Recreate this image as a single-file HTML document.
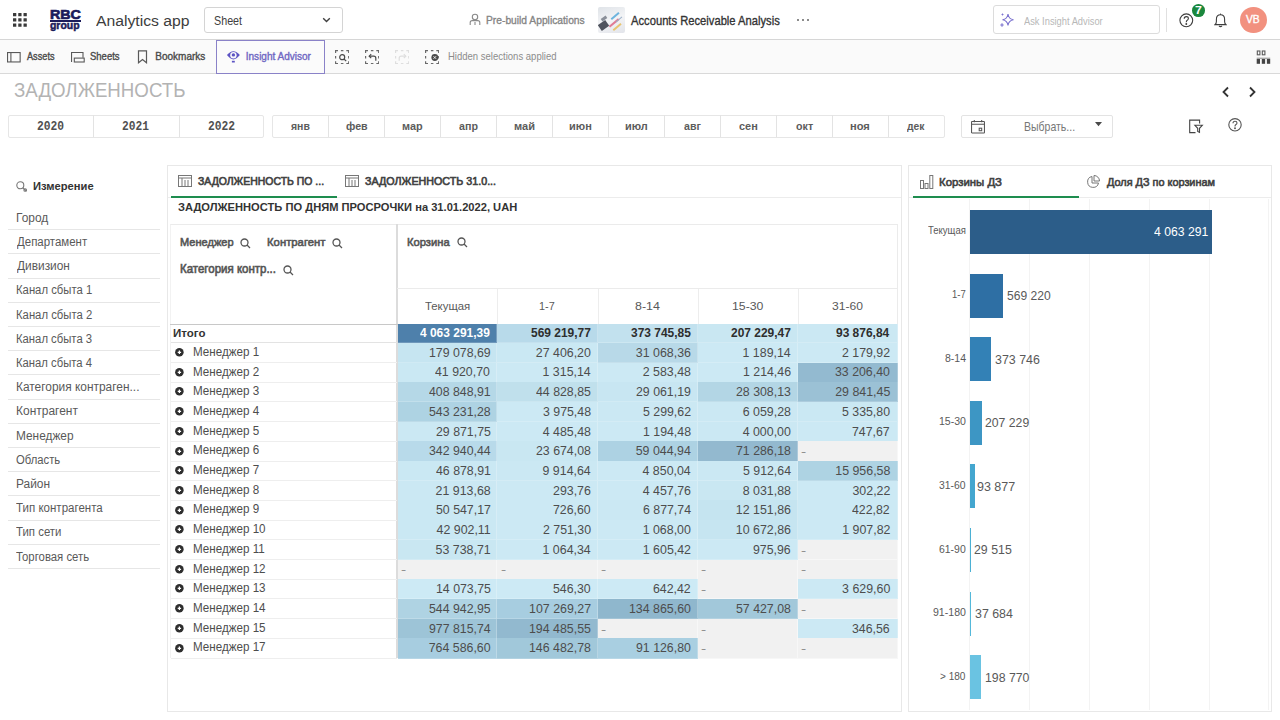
<!DOCTYPE html><html><head><meta charset="utf-8"><style>*{box-sizing:border-box;margin:0;padding:0}
html,body{width:1280px;height:720px;overflow:hidden;background:#fff;font-family:"Liberation Sans",sans-serif;color:#404040}
.abs{position:absolute}
.t{position:absolute;white-space:nowrap;line-height:1}
</style></head><body>
<div class="abs" style="left:0;top:0;width:1280px;height:40px;background:#fff;border-bottom:1px solid #d6d6d6"></div>
<svg class="abs" style="left:13px;top:13px" width="15" height="15" viewBox="0 0 15 15" fill="#3a3a3a"><rect x="0" y="0" width="3.3" height="3.3" rx="0.3"/><rect x="0" y="5.25" width="3.3" height="3.3" rx="0.3"/><rect x="0" y="10.5" width="3.3" height="3.3" rx="0.3"/><rect x="5.25" y="0" width="3.3" height="3.3" rx="0.3"/><rect x="5.25" y="5.25" width="3.3" height="3.3" rx="0.3"/><rect x="5.25" y="10.5" width="3.3" height="3.3" rx="0.3"/><rect x="10.5" y="0" width="3.3" height="3.3" rx="0.3"/><rect x="10.5" y="5.25" width="3.3" height="3.3" rx="0.3"/><rect x="10.5" y="10.5" width="3.3" height="3.3" rx="0.3"/></svg>
<div class="t" style="left:49.55px;top:8px;font-family:'Liberation Sans';font-size:13.37px;font-weight:bold;color:#1b1b5a;transform:scaleX(1.0645);transform-origin:0 0;-webkit-text-stroke:0.7px #1b1b5a;">RBC</div>
<div class="abs" style="left:50px;top:20.3px;width:30.5px;height:1.4px;background:#1b1b5a"></div>
<div class="t" style="left:50.37px;top:20px;font-family:'Liberation Sans';font-size:10.50px;font-weight:bold;color:#1b1b5a;transform:scaleX(0.9937);transform-origin:0 0;-webkit-text-stroke:0.5px #1b1b5a;">group</div>
<div class="t" style="left:96.37px;top:13px;font-family:'Liberation Sans';font-size:15.26px;font-weight:normal;color:#3d3d3d;transform:scaleX(1.0321);transform-origin:0 0;">Analytics app</div>
<div class="abs" style="left:203.5px;top:7px;width:139.5px;height:26px;border:1px solid #d4d4d4;border-radius:3px"></div>
<div class="t" style="left:213.51px;top:15px;font-family:'Liberation Sans';font-size:11.99px;font-weight:normal;color:#404040;transform:scaleX(0.8956);transform-origin:0 0;">Sheet</div>
<svg class="abs" style="left:322px;top:17px" width="9" height="6" viewBox="0 0 9 6"><path d="M1.2 1.2 L4.5 4.5 L7.8 1.2" fill="none" stroke="#404040" stroke-width="1.4"/></svg>
<svg class="abs" style="left:469px;top:13px" width="12" height="13" viewBox="0 0 12 13" fill="none" stroke="#8a8a8a" stroke-width="1.1"><circle cx="6" cy="4" r="2.7"/><path d="M1.2 12 V9.6 Q1.2 7.6 3.2 7.6 H8.8 Q10.8 7.6 10.8 9.6 V12"/><path d="M6 9 V12"/></svg>
<div class="t" style="left:485.86px;top:15px;font-family:'Liberation Sans';font-size:11.48px;font-weight:normal;color:#858585;transform:scaleX(0.8948);transform-origin:0 0;-webkit-text-stroke:0.35px #858585;">Pre-build Applications</div>
<div class="abs" style="left:598px;top:7px;width:27px;height:26px;border-radius:2px;background:linear-gradient(160deg,#dfe3e8 0%,#f3f4f6 50%,#e2e4ea 100%);overflow:hidden">
<div class="abs" style="left:1px;top:15px;width:9px;height:7px;background:#50545e;transform:rotate(-35deg)"></div>
<div class="abs" style="left:3px;top:10px;width:6px;height:3px;background:#8a8f99;transform:rotate(-35deg)"></div>
<div class="abs" style="left:12px;top:8px;width:10px;height:1.6px;background:#6db4de;transform:rotate(-40deg)"></div>
<div class="abs" style="left:10px;top:15px;width:12px;height:1.8px;background:#e07a92;transform:rotate(-40deg)"></div>
<div class="abs" style="left:14px;top:19px;width:10px;height:1.5px;background:#e8c470;transform:rotate(-40deg)"></div>
<div class="abs" style="left:17px;top:12px;width:8px;height:1.2px;background:#9ab0c8;transform:rotate(-40deg)"></div></div>
<div class="t" style="left:631.48px;top:14px;font-family:'Liberation Sans';font-size:13.37px;font-weight:normal;color:#333;transform:scaleX(0.8383);transform-origin:0 0;-webkit-text-stroke:0.35px #333;">Accounts Receivable Analysis</div>
<div class="abs" style="left:797px;top:19px;width:2.4px;height:2.4px;border-radius:50%;background:#666"></div><div class="abs" style="left:802px;top:19px;width:2.4px;height:2.4px;border-radius:50%;background:#666"></div><div class="abs" style="left:807px;top:19px;width:2.4px;height:2.4px;border-radius:50%;background:#666"></div>
<div class="abs" style="left:992.7px;top:5.2px;width:167px;height:29.3px;border:1px solid #dcdcdc;border-radius:3px"></div>
<svg class="abs" style="left:999px;top:12px" width="16" height="16" viewBox="0 0 16 16" fill="none" stroke="#7b72cf" stroke-width="1.1"><path d="M9 2 Q9.6 7 14.5 7.8 Q9.6 8.6 9 13.5 Q8.4 8.6 3.5 7.8 Q8.4 7 9 2Z"/><path d="M3 11.3 V14.7 M1.3 13 H4.7"/><path d="M3.5 1.5 V3.5 M2.5 2.5 H4.5" stroke-width="0.9"/></svg>
<div class="t" style="left:1023.98px;top:16px;font-family:'Liberation Sans';font-size:10.90px;font-weight:normal;color:#b8b8b8;transform:scaleX(0.8553);transform-origin:0 0;">Ask Insight Advisor</div>
<div class="abs" style="left:1166px;top:8px;width:1px;height:24px;background:#e0e0e0"></div>
<svg class="abs" style="left:1179px;top:13px" width="15" height="15" viewBox="0 0 15 15" fill="none" stroke="#3d3d3d" stroke-width="1.1"><circle cx="7.3" cy="7.3" r="6.4"/><path d="M5.2 5.7 Q5.2 3.6 7.3 3.6 Q9.4 3.6 9.4 5.5 Q9.4 6.7 8 7.4 Q7.3 7.8 7.3 9.2"/><circle cx="7.3" cy="11" r="0.4" fill="#3d3d3d"/></svg>
<div class="abs" style="left:1191.8px;top:3.9px;width:13.3px;height:13px;border-radius:50%;background:#1a873d"></div>
<div class="t" style="left:1195.27px;top:5px;font-family:'Liberation Sans';font-size:10.90px;font-weight:bold;color:#fff;transform:scaleX(1.1338);transform-origin:0 0;">7</div>
<svg class="abs" style="left:1213.5px;top:12.5px" width="13" height="15" viewBox="0 0 13 15" fill="none" stroke="#3d3d3d" stroke-width="1.1"><path d="M1 11.6 Q2.4 10.6 2.4 8.6 V6.2 Q2.4 1.8 6.5 1.8 Q10.6 1.8 10.6 6.2 V8.6 Q10.6 10.6 12 11.6 Z"/><path d="M5 12.9 Q6.5 14.4 8 12.9"/><path d="M6.5 0.6 V1.8"/></svg>
<div class="abs" style="left:1239.8px;top:6.6px;width:27px;height:26.6px;border-radius:50%;background:#f2917f"></div>
<div class="t" style="left:1246.45px;top:15px;font-family:'Liberation Sans';font-size:10.32px;font-weight:normal;color:#fff;transform:scaleX(0.9942);transform-origin:0 0;-webkit-text-stroke:0.35px #fff;">VB</div>
<div class="abs" style="left:0;top:40px;width:1280px;height:34px;background:#fafafa;border-bottom:1px solid #d9d9d9"></div>
<svg class="abs" style="left:6.5px;top:51.5px" width="14" height="11" viewBox="0 0 14 11" fill="none" stroke="#595959" stroke-width="1.1"><rect x="0.55" y="0.55" width="12.6" height="9.4"/><path d="M3.9 0.55 V10"/></svg>
<div class="t" style="left:26.68px;top:52px;font-family:'Liberation Sans';font-size:10.03px;font-weight:normal;color:#4a4a4a;transform:scaleX(0.9153);transform-origin:0 0;-webkit-text-stroke:0.35px #4a4a4a;">Assets</div>
<svg class="abs" style="left:70.5px;top:51.5px" width="14" height="11" viewBox="0 0 14 11" fill="none" stroke="#595959" stroke-width="1.1"><path d="M0.55 10 V0.55 H12 V5.8"/><rect x="3.3" y="6.1" width="9.9" height="3.9"/></svg>
<div class="t" style="left:90.17px;top:52px;font-family:'Liberation Sans';font-size:10.03px;font-weight:normal;color:#4a4a4a;transform:scaleX(0.9472);transform-origin:0 0;-webkit-text-stroke:0.35px #4a4a4a;">Sheets</div>
<svg class="abs" style="left:137px;top:50px" width="11" height="14" viewBox="0 0 11 14" fill="none" stroke="#595959" stroke-width="1.2"><path d="M1.5 0.8 H9.5 V12.8 L5.5 9.6 L1.5 12.8 Z"/></svg>
<div class="t" style="left:155.28px;top:52px;font-family:'Liberation Sans';font-size:10.03px;font-weight:normal;color:#4a4a4a;-webkit-text-stroke:0.35px #4a4a4a;">Bookmarks</div>
<div class="abs" style="left:216px;top:39.5px;width:109px;height:34px;border:1px solid #8a82c8;background:#fbfbfb"></div>
<svg class="abs" style="left:226px;top:49px" width="15" height="15" viewBox="0 0 15 15"><path d="M0.9 6.1 Q7.4 -1.6 13.9 6.1 Q10.5 10.2 7.4 10.4 Q4.3 10.2 0.9 6.1Z" fill="#5d54c4"/><circle cx="7.4" cy="6.3" r="3.2" fill="#fafafa"/><circle cx="7.4" cy="5.9" r="1.7" fill="#5d54c4"/><rect x="5.9" y="11.8" width="2.9" height="1.7" fill="#5d54c4"/></svg>
<div class="t" style="left:245.77px;top:52px;font-family:'Liberation Sans';font-size:10.03px;font-weight:normal;color:#6f67c3;-webkit-text-stroke:0.35px #6f67c3;">Insight Advisor</div>
<svg class="abs" style="left:334.8px;top:49.7px" width="14.3" height="14.3" viewBox="0 0 14.3 14.3" fill="none" stroke="#6a6a6a" stroke-width="1.2"><path d="M0.6 3 V0.6 H3 M5.9 0.6 H8.4 M11.3 0.6 H13.7 V3 M13.7 5.9 V8.4 M13.7 11.3 V13.7 H11.3 M8.4 13.7 H5.9 M3 13.7 H0.6 V11.3 M0.6 8.4 V5.9"/></svg>
<svg class="abs" style="left:334.8px;top:49.7px" width="15" height="15" viewBox="0 0 15 15" fill="none" stroke="#4a4a4a" stroke-width="1.2"><circle cx="7.2" cy="7.2" r="2.5"/><path d="M9 9 L11.2 11.2"/></svg>
<svg class="abs" style="left:364.8px;top:49.7px" width="14.3" height="14.3" viewBox="0 0 14.3 14.3" fill="none" stroke="#6a6a6a" stroke-width="1.2"><path d="M0.6 3 V0.6 H3 M5.9 0.6 H8.4 M11.3 0.6 H13.7 V3 M13.7 5.9 V8.4 M13.7 11.3 V13.7 H11.3 M8.4 13.7 H5.9 M3 13.7 H0.6 V11.3 M0.6 8.4 V5.9"/></svg>
<svg class="abs" style="left:364.8px;top:49.5px" width="15" height="15" viewBox="0 0 15 15" fill="none" stroke="#4a4a4a" stroke-width="1.2"><path d="M4.2 6.2 H8.8 Q10.8 6.2 10.8 8.2 V10.8"/><path d="M6.2 4.2 L4.2 6.2 L6.2 8.2"/></svg>
<svg class="abs" style="left:394.8px;top:49.7px" width="14.3" height="14.3" viewBox="0 0 14.3 14.3" fill="none" stroke="#dedede" stroke-width="1.2"><path d="M0.6 3 V0.6 H3 M5.9 0.6 H8.4 M11.3 0.6 H13.7 V3 M13.7 5.9 V8.4 M13.7 11.3 V13.7 H11.3 M8.4 13.7 H5.9 M3 13.7 H0.6 V11.3 M0.6 8.4 V5.9"/></svg>
<svg class="abs" style="left:394.8px;top:49.5px" width="15" height="15" viewBox="0 0 15 15" fill="none" stroke="#dedede" stroke-width="1.2"><path d="M10.8 6.2 H6.2 Q4.2 6.2 4.2 8.2 V10.8"/><path d="M8.8 4.2 L10.8 6.2 L8.8 8.2"/></svg>
<svg class="abs" style="left:424.8px;top:49.7px" width="14.3" height="14.3" viewBox="0 0 14.3 14.3" fill="none" stroke="#6a6a6a" stroke-width="1.2"><path d="M0.6 3 V0.6 H3 M5.9 0.6 H8.4 M11.3 0.6 H13.7 V3 M13.7 5.9 V8.4 M13.7 11.3 V13.7 H11.3 M8.4 13.7 H5.9 M3 13.7 H0.6 V11.3 M0.6 8.4 V5.9"/></svg>
<svg class="abs" style="left:424.8px;top:49.5px" width="15" height="15" viewBox="0 0 15 15"><circle cx="9.8" cy="7.5" r="3.4" fill="#4a4a4a"/><path d="M8.5 6.2 L11.1 8.8 M11.1 6.2 L8.5 8.8" stroke="#fff" stroke-width="0.9"/></svg>
<div class="t" style="left:447.97px;top:52px;font-family:'Liberation Sans';font-size:10.03px;font-weight:normal;color:#8c8c8c;transform:scaleX(0.9505);transform-origin:0 0;">Hidden selections applied</div>
<svg class="abs" style="left:1256px;top:49.5px" width="15" height="15" viewBox="0 0 15 15"><rect x="1.3" y="1" width="2.6" height="3.8" fill="none" stroke="#5a5a5a" stroke-width="1.1"/><rect x="6.3" y="1" width="2.6" height="3.8" fill="none" stroke="#5a5a5a" stroke-width="1.1"/><rect x="0.7" y="7.6" width="13.5" height="1.4" fill="#aaa"/><rect x="0.7" y="9" width="3.3" height="4.8" fill="#454545"/><rect x="5.8" y="9" width="3.3" height="4.8" fill="#454545"/><rect x="10.9" y="9" width="3.3" height="4.8" fill="#454545"/></svg>
<div class="t" style="left:14.29px;top:80px;font-family:'Liberation Sans';font-size:20.06px;font-weight:normal;color:#b3b3b3;transform:scaleX(0.9325);transform-origin:0 0;">ЗАДОЛЖЕННОСТЬ</div>
<svg class="abs" style="left:1221px;top:86px" width="9" height="12" viewBox="0 0 9 12" fill="none" stroke="#333" stroke-width="1.8"><path d="M7 1.5 L2.5 6 L7 10.5"/></svg>
<svg class="abs" style="left:1248px;top:86px" width="9" height="12" viewBox="0 0 9 12" fill="none" stroke="#333" stroke-width="1.8"><path d="M2 1.5 L6.5 6 L2 10.5"/></svg>
<div class="abs" style="left:7.7px;top:114.5px;width:256.6px;height:23px;border:1px solid #e6e6e6;border-radius:2px;background:#fff"></div>
<div class="abs" style="left:93px;top:115px;width:1px;height:22px;background:#e3e3e3"></div>
<div class="abs" style="left:178.5px;top:115px;width:1px;height:22px;background:#e3e3e3"></div>
<div class="t" style="left:36.87px;top:120px;font-family:'Liberation Mono';font-size:13.20px;font-weight:bold;color:#505050;transform:scaleX(0.8561);transform-origin:0 0;">2020</div>
<div class="t" style="left:122.38px;top:120px;font-family:'Liberation Mono';font-size:13.20px;font-weight:bold;color:#505050;transform:scaleX(0.8505);transform-origin:0 0;">2021</div>
<div class="t" style="left:207.87px;top:120px;font-family:'Liberation Mono';font-size:13.20px;font-weight:bold;color:#505050;transform:scaleX(0.8565);transform-origin:0 0;">2022</div>
<div class="abs" style="left:272.4px;top:114.5px;width:672.6px;height:23px;border:1px solid #e6e6e6;border-radius:2px;background:#fff"></div>
<div class="t" style="left:291.16px;top:121px;font-family:'Liberation Sans';font-size:11.40px;font-weight:bold;color:#5c5c5c;transform:scaleX(0.9197);transform-origin:0 0;">янв</div>
<div class="abs" style="left:328.37px;top:115px;width:1px;height:22px;background:#e3e3e3"></div>
<div class="t" style="left:345.51px;top:121px;font-family:'Liberation Sans';font-size:11.40px;font-weight:bold;color:#5c5c5c;transform:scaleX(0.9364);transform-origin:0 0;">фев</div>
<div class="abs" style="left:384.34px;top:115px;width:1px;height:22px;background:#e3e3e3"></div>
<div class="t" style="left:401.86px;top:121px;font-family:'Liberation Sans';font-size:11.40px;font-weight:bold;color:#5c5c5c;transform:scaleX(0.9560);transform-origin:0 0;">мар</div>
<div class="abs" style="left:440.31px;top:115px;width:1px;height:22px;background:#e3e3e3"></div>
<div class="t" style="left:458.91px;top:121px;font-family:'Liberation Sans';font-size:11.40px;font-weight:bold;color:#5c5c5c;transform:scaleX(0.9372);transform-origin:0 0;">апр</div>
<div class="abs" style="left:496.28px;top:115px;width:1px;height:22px;background:#e3e3e3"></div>
<div class="t" style="left:513.77px;top:121px;font-family:'Liberation Sans';font-size:11.40px;font-weight:bold;color:#5c5c5c;transform:scaleX(0.9712);transform-origin:0 0;">май</div>
<div class="abs" style="left:552.25px;top:115px;width:1px;height:22px;background:#e3e3e3"></div>
<div class="t" style="left:568.85px;top:121px;font-family:'Liberation Sans';font-size:11.40px;font-weight:bold;color:#5c5c5c;transform:scaleX(0.9648);transform-origin:0 0;">июн</div>
<div class="abs" style="left:608.22px;top:115px;width:1px;height:22px;background:#e3e3e3"></div>
<div class="t" style="left:624.79px;top:121px;font-family:'Liberation Sans';font-size:11.40px;font-weight:bold;color:#5c5c5c;transform:scaleX(0.9646);transform-origin:0 0;">июл</div>
<div class="abs" style="left:664.19px;top:115px;width:1px;height:22px;background:#e3e3e3"></div>
<div class="t" style="left:683.73px;top:121px;font-family:'Liberation Sans';font-size:11.40px;font-weight:bold;color:#5c5c5c;transform:scaleX(0.9330);transform-origin:0 0;">авг</div>
<div class="abs" style="left:720.16px;top:115px;width:1px;height:22px;background:#e3e3e3"></div>
<div class="t" style="left:738.93px;top:121px;font-family:'Liberation Sans';font-size:11.40px;font-weight:bold;color:#5c5c5c;transform:scaleX(0.9610);transform-origin:0 0;">сен</div>
<div class="abs" style="left:776.13px;top:115px;width:1px;height:22px;background:#e3e3e3"></div>
<div class="t" style="left:795.50px;top:121px;font-family:'Liberation Sans';font-size:11.40px;font-weight:bold;color:#5c5c5c;transform:scaleX(0.9392);transform-origin:0 0;">окт</div>
<div class="abs" style="left:832.10px;top:115px;width:1px;height:22px;background:#e3e3e3"></div>
<div class="t" style="left:850.16px;top:121px;font-family:'Liberation Sans';font-size:11.40px;font-weight:bold;color:#5c5c5c;transform:scaleX(0.9764);transform-origin:0 0;">ноя</div>
<div class="abs" style="left:888.07px;top:115px;width:1px;height:22px;background:#e3e3e3"></div>
<div class="t" style="left:907.32px;top:121px;font-family:'Liberation Sans';font-size:11.40px;font-weight:bold;color:#5c5c5c;transform:scaleX(0.9034);transform-origin:0 0;">дек</div>
<div class="abs" style="left:960.5px;top:114.5px;width:152.5px;height:23px;border:1px solid #e3e3e3;border-radius:2px;background:#fff"></div>
<svg class="abs" style="left:970.8px;top:120px" width="14.5" height="13.5" viewBox="0 0 14.5 13.5" fill="none" stroke="#555" stroke-width="1.05"><rect x="0.55" y="1.5" width="12.9" height="11.4" rx="0.5"/><path d="M0.55 4.2 H13.45 M3.3 0 V2.3 M10.7 0 V2.3"/><rect x="8.2" y="8.2" width="2.5" height="2.5"/></svg>
<div class="t" style="left:1024.44px;top:121px;font-family:'Liberation Sans';font-size:12.06px;font-weight:normal;color:#777;transform:scaleX(0.8717);transform-origin:0 0;">Выбрать...</div>
<svg class="abs" style="left:1095.3px;top:122.2px" width="7" height="4.5" viewBox="0 0 7 4.5"><path d="M0 0 H7 L3.5 4.2Z" fill="#4a4a4a"/></svg>
<svg class="abs" style="left:1189px;top:119px" width="15" height="15" viewBox="0 0 15 15" fill="none" stroke="#444" stroke-width="1.1"><path d="M10.6 4.6 V1.1 H0.7 V13.6 H6.5"/><path d="M5.9 6.3 H13.3 L10.5 9.3 V13.3 L8.7 12.5 V9.3 Z"/></svg>
<svg class="abs" style="left:1228px;top:118px" width="15" height="14" viewBox="0 0 15 14" fill="none" stroke="#555" stroke-width="1.1"><circle cx="7" cy="6.8" r="6.2"/><path d="M5 5.3 Q5 3.3 7 3.3 Q9 3.3 9 5 Q9 6.2 7.7 6.8 Q7 7.2 7 8.5"/><circle cx="7" cy="10.2" r="0.4" fill="#555"/></svg>
<svg class="abs" style="left:16px;top:180.5px" width="12" height="11" viewBox="0 0 12 11" fill="none" stroke="#777" stroke-width="1.1"><circle cx="4.3" cy="4.3" r="3.5"/><path d="M6.8 6.8 L10.5 10"/><circle cx="9.2" cy="9" r="1.3"/></svg>
<div class="t" style="left:33.16px;top:181px;font-family:'Liberation Sans';font-size:10.61px;font-weight:bold;color:#333;transform:scaleX(1.0524);transform-origin:0 0;">Измерение</div>
<div class="t" style="left:15.62px;top:212px;font-family:'Liberation Sans';font-size:12.50px;font-weight:normal;color:#595959;transform:scaleX(0.9549);transform-origin:0 0;">Город</div>
<div class="abs" style="left:8px;top:229.20px;width:152px;height:1px;background:#e6e6e6"></div>
<div class="t" style="left:16.52px;top:236px;font-family:'Liberation Sans';font-size:12.50px;font-weight:normal;color:#595959;transform:scaleX(0.9170);transform-origin:0 0;">Департамент</div>
<div class="abs" style="left:8px;top:253.40px;width:152px;height:1px;background:#e6e6e6"></div>
<div class="t" style="left:16.51px;top:260px;font-family:'Liberation Sans';font-size:12.50px;font-weight:normal;color:#595959;transform:scaleX(0.9509);transform-origin:0 0;">Дивизион</div>
<div class="abs" style="left:8px;top:277.60px;width:152px;height:1px;background:#e6e6e6"></div>
<div class="t" style="left:15.67px;top:284px;font-family:'Liberation Sans';font-size:12.50px;font-weight:normal;color:#595959;transform:scaleX(0.9046);transform-origin:0 0;">Канал сбыта 1</div>
<div class="abs" style="left:8px;top:301.80px;width:152px;height:1px;background:#e6e6e6"></div>
<div class="t" style="left:15.67px;top:309px;font-family:'Liberation Sans';font-size:12.50px;font-weight:normal;color:#595959;transform:scaleX(0.9048);transform-origin:0 0;">Канал сбыта 2</div>
<div class="abs" style="left:8px;top:326.00px;width:152px;height:1px;background:#e6e6e6"></div>
<div class="t" style="left:15.67px;top:333px;font-family:'Liberation Sans';font-size:12.50px;font-weight:normal;color:#595959;transform:scaleX(0.9039);transform-origin:0 0;">Канал сбыта 3</div>
<div class="abs" style="left:8px;top:350.20px;width:152px;height:1px;background:#e6e6e6"></div>
<div class="t" style="left:15.68px;top:357px;font-family:'Liberation Sans';font-size:12.50px;font-weight:normal;color:#595959;transform:scaleX(0.9019);transform-origin:0 0;">Канал сбыта 4</div>
<div class="abs" style="left:8px;top:374.40px;width:152px;height:1px;background:#e6e6e6"></div>
<div class="t" style="left:15.62px;top:381px;font-family:'Liberation Sans';font-size:12.50px;font-weight:normal;color:#595959;transform:scaleX(0.9529);transform-origin:0 0;">Категория контраген...</div>
<div class="abs" style="left:8px;top:398.60px;width:152px;height:1px;background:#e6e6e6"></div>
<div class="t" style="left:15.62px;top:405px;font-family:'Liberation Sans';font-size:12.50px;font-weight:normal;color:#595959;transform:scaleX(0.9575);transform-origin:0 0;">Контрагент</div>
<div class="abs" style="left:8px;top:422.80px;width:152px;height:1px;background:#e6e6e6"></div>
<div class="t" style="left:15.63px;top:430px;font-family:'Liberation Sans';font-size:12.50px;font-weight:normal;color:#595959;transform:scaleX(0.9493);transform-origin:0 0;">Менеджер</div>
<div class="abs" style="left:8px;top:447.00px;width:152px;height:1px;background:#e6e6e6"></div>
<div class="t" style="left:16.07px;top:454px;font-family:'Liberation Sans';font-size:12.50px;font-weight:normal;color:#595959;transform:scaleX(0.9009);transform-origin:0 0;">Область</div>
<div class="abs" style="left:8px;top:471.20px;width:152px;height:1px;background:#e6e6e6"></div>
<div class="t" style="left:15.62px;top:478px;font-family:'Liberation Sans';font-size:12.50px;font-weight:normal;color:#595959;transform:scaleX(0.9550);transform-origin:0 0;">Район</div>
<div class="abs" style="left:8px;top:495.40px;width:152px;height:1px;background:#e6e6e6"></div>
<div class="t" style="left:16.34px;top:502px;font-family:'Liberation Sans';font-size:12.50px;font-weight:normal;color:#595959;transform:scaleX(0.9222);transform-origin:0 0;">Тип контрагента</div>
<div class="abs" style="left:8px;top:519.60px;width:152px;height:1px;background:#e6e6e6"></div>
<div class="t" style="left:16.34px;top:526px;font-family:'Liberation Sans';font-size:12.50px;font-weight:normal;color:#595959;transform:scaleX(0.9125);transform-origin:0 0;">Тип сети</div>
<div class="abs" style="left:8px;top:543.80px;width:152px;height:1px;background:#e6e6e6"></div>
<div class="t" style="left:16.35px;top:551px;font-family:'Liberation Sans';font-size:12.50px;font-weight:normal;color:#595959;transform:scaleX(0.9081);transform-origin:0 0;">Торговая сеть</div>
<div class="abs" style="left:8px;top:568.00px;width:152px;height:1px;background:#e6e6e6"></div>
<div class="abs" style="left:167px;top:165px;width:735px;height:547px;border:1px solid #e8e8e8;background:#fff"></div>
<svg class="abs" style="left:178px;top:175px" width="14" height="12" viewBox="0 0 14 12" fill="none" stroke="#777" stroke-width="1"><rect x="0.5" y="0.5" width="13" height="11"/><path d="M0.5 3 H13.5 M4 3 V11.5 M7 5 V11.5 M10 5 V11.5"/></svg>
<div class="t" style="left:198.26px;top:176px;font-family:'Liberation Sans';font-size:10.61px;font-weight:normal;color:#404040;transform:scaleX(0.9855);transform-origin:0 0;-webkit-text-stroke:0.6px #404040;">ЗАДОЛЖЕННОСТЬ ПО ...</div>
<svg class="abs" style="left:345px;top:175px" width="14" height="12" viewBox="0 0 14 12" fill="none" stroke="#777" stroke-width="1"><rect x="0.5" y="0.5" width="13" height="11"/><path d="M0.5 3 H13.5 M4 3 V11.5 M7 5 V11.5 M10 5 V11.5"/></svg>
<div class="t" style="left:364.90px;top:176px;font-family:'Liberation Sans';font-size:10.61px;font-weight:normal;color:#404040;transform:scaleX(1.0101);transform-origin:0 0;-webkit-text-stroke:0.6px #404040;">ЗАДОЛЖЕННОСТЬ 31.0...</div>
<div class="abs" style="left:168px;top:197px;width:733px;height:1px;background:#ececec"></div>
<div class="abs" style="left:170.5px;top:195.8px;width:166px;height:2px;background:#1e8d4f"></div>
<div class="t" style="left:178.25px;top:202px;font-family:'Liberation Sans';font-size:11.34px;font-weight:bold;color:#333;transform:scaleX(0.9828);transform-origin:0 0;">ЗАДОЛЖЕННОСТЬ ПО ДНЯМ ПРОСРОЧКИ на 31.01.2022, UAH</div>
<div class="abs" style="left:169.5px;top:223.5px;width:728.5px;height:434.5px;border:1px solid #ebebeb;border-left-color:#f2f2f2;border-bottom:none"></div>
<div class="abs" style="left:396.4px;top:223.5px;width:1.6px;height:434.5px;background:#dcdcdc"></div>
<div class="abs" style="left:397.2px;top:288.2px;width:500.8px;height:1px;background:#ebebeb"></div>
<div class="abs" style="left:497.3px;top:288.5px;width:1px;height:35.5px;background:#ededed"></div>
<div class="abs" style="left:597.6px;top:288.5px;width:1px;height:35.5px;background:#ededed"></div>
<div class="abs" style="left:697.6px;top:288.5px;width:1px;height:35.5px;background:#ededed"></div>
<div class="abs" style="left:797.6px;top:288.5px;width:1px;height:35.5px;background:#ededed"></div>
<div class="t" style="left:180.39px;top:236px;font-family:'Liberation Sans';font-size:11.77px;font-weight:normal;color:#555;transform:scaleX(0.9378);transform-origin:0 0;-webkit-text-stroke:0.6px #555;">Менеджер</div>
<svg class="abs" style="left:239.5px;top:237.5px" width="11" height="11" viewBox="0 0 11 11" fill="none" stroke="#555" stroke-width="1.3"><circle cx="4.5" cy="4.5" r="3.5"/><path d="M7 7 L10 10"/></svg>
<div class="t" style="left:266.77px;top:236px;font-family:'Liberation Sans';font-size:11.77px;font-weight:normal;color:#555;transform:scaleX(0.9614);transform-origin:0 0;-webkit-text-stroke:0.6px #555;">Контрагент</div>
<svg class="abs" style="left:331.5px;top:237.5px" width="11" height="11" viewBox="0 0 11 11" fill="none" stroke="#555" stroke-width="1.3"><circle cx="4.5" cy="4.5" r="3.5"/><path d="M7 7 L10 10"/></svg>
<div class="t" style="left:180.36px;top:264px;font-family:'Liberation Sans';font-size:11.92px;font-weight:normal;color:#555;transform:scaleX(0.9647);transform-origin:0 0;-webkit-text-stroke:0.6px #555;">Категория контр...</div>
<svg class="abs" style="left:282.5px;top:264.5px" width="11" height="11" viewBox="0 0 11 11" fill="none" stroke="#555" stroke-width="1.3"><circle cx="4.5" cy="4.5" r="3.5"/><path d="M7 7 L10 10"/></svg>
<div class="t" style="left:407.28px;top:236px;font-family:'Liberation Sans';font-size:11.77px;font-weight:normal;color:#555;transform:scaleX(0.9526);transform-origin:0 0;-webkit-text-stroke:0.6px #555;">Корзина</div>
<svg class="abs" style="left:456.8px;top:237.3px" width="11" height="11" viewBox="0 0 11 11" fill="none" stroke="#555" stroke-width="1.3"><circle cx="4.5" cy="4.5" r="3.5"/><path d="M7 7 L10 10"/></svg>
<div class="t" style="left:424.89px;top:300px;font-family:'Liberation Sans';font-size:11.77px;font-weight:normal;color:#595959;transform:scaleX(0.9655);transform-origin:0 0;">Текущая</div>
<div class="t" style="left:539.47px;top:300px;font-family:'Liberation Sans';font-size:11.77px;font-weight:normal;color:#595959;transform:scaleX(0.9209);transform-origin:0 0;">1-7</div>
<div class="t" style="left:635.06px;top:300px;font-family:'Liberation Sans';font-size:11.77px;font-weight:normal;color:#595959;transform:scaleX(1.0569);transform-origin:0 0;">8-14</div>
<div class="t" style="left:731.66px;top:300px;font-family:'Liberation Sans';font-size:11.77px;font-weight:normal;color:#595959;transform:scaleX(1.0433);transform-origin:0 0;">15-30</div>
<div class="t" style="left:832.34px;top:300px;font-family:'Liberation Sans';font-size:11.77px;font-weight:normal;color:#595959;transform:scaleX(1.0273);transform-origin:0 0;">31-60</div>
<div class="abs" style="left:169.5px;top:323.6px;width:728.5px;height:1.2px;background:#c8c8c8"></div>
<div class="t" style="left:173.04px;top:328px;font-family:'Liberation Sans';font-size:11.19px;font-weight:bold;color:#333;transform:scaleX(1.0268);transform-origin:0 0;">Итого</div>
<div class="abs" style="left:170.5px;top:342.30px;width:226.7px;height:1px;background:#e3e3e3"></div>
<div class="abs" style="left:398.00px;top:324.40px;width:99.30px;height:19.00px;background:#4e80ab;border-right:1px solid rgba(255,255,255,0.25);border-bottom:1px solid rgba(255,255,255,0.18)"></div>
<div class="t" style="left:420.47px;top:327px;font-family:'Liberation Sans';font-size:12.40px;font-weight:bold;color:#fff;transform:scaleX(0.9650);transform-origin:0 0;">4 063 291,39</div>
<div class="abs" style="left:497.30px;top:324.40px;width:100.30px;height:19.00px;background:#b8daea;border-right:1px solid rgba(255,255,255,0.25);border-bottom:1px solid rgba(255,255,255,0.18)"></div>
<div class="t" style="left:530.84px;top:327px;font-family:'Liberation Sans';font-size:12.40px;font-weight:bold;color:#2e2e2e;transform:scaleX(0.9650);transform-origin:0 0;">569 219,77</div>
<div class="abs" style="left:597.60px;top:324.40px;width:100.00px;height:19.00px;background:#c2e1ee;border-right:1px solid rgba(255,255,255,0.25);border-bottom:1px solid rgba(255,255,255,0.18)"></div>
<div class="t" style="left:630.64px;top:327px;font-family:'Liberation Sans';font-size:12.40px;font-weight:bold;color:#2e2e2e;transform:scaleX(0.9650);transform-origin:0 0;">373 745,85</div>
<div class="abs" style="left:697.60px;top:324.40px;width:100.00px;height:19.00px;background:#c9e7f2;border-right:1px solid rgba(255,255,255,0.25);border-bottom:1px solid rgba(255,255,255,0.18)"></div>
<div class="t" style="left:730.84px;top:327px;font-family:'Liberation Sans';font-size:12.40px;font-weight:bold;color:#2e2e2e;transform:scaleX(0.9650);transform-origin:0 0;">207 229,47</div>
<div class="abs" style="left:797.60px;top:324.40px;width:100.40px;height:19.00px;background:#cbe8f3;border-right:1px solid rgba(255,255,255,0.25);border-bottom:1px solid rgba(255,255,255,0.18)"></div>
<div class="t" style="left:836.43px;top:327px;font-family:'Liberation Sans';font-size:12.40px;font-weight:bold;color:#2e2e2e;transform:scaleX(0.9650);transform-origin:0 0;">93 876,84</div>
<div class="abs" style="left:170.5px;top:362.00px;width:226.7px;height:1px;background:#eeeeee"></div>
<svg class="abs" style="left:175.4px;top:348.00px" width="9" height="9" viewBox="0 0 9 9"><circle cx="4.4" cy="4.3" r="4.25" fill="#2e2e2e"/><path d="M4.4 2.6 V6 M2.7 4.3 H6.1" stroke="#fff" stroke-width="1.25"/></svg>
<div class="t" style="left:193.45px;top:346px;font-family:'Liberation Sans';font-size:12.00px;font-weight:normal;color:#4d4d4d;transform:scaleX(0.9691);transform-origin:0 0;">Менеджер 1</div>
<div class="abs" style="left:398.00px;top:342.80px;width:99.30px;height:20.30px;background:#c6e5f1;border-right:1px solid rgba(255,255,255,0.25);border-bottom:1px solid rgba(255,255,255,0.18)"></div>
<div class="t" style="left:428.73px;top:347px;font-family:'Liberation Sans';font-size:12.40px;font-weight:normal;color:#4d4d4d;transform:scaleX(0.9950);transform-origin:0 0;">179 078,69</div>
<div class="abs" style="left:497.30px;top:342.80px;width:100.30px;height:20.30px;background:#cae8f3;border-right:1px solid rgba(255,255,255,0.25);border-bottom:1px solid rgba(255,255,255,0.18)"></div>
<div class="t" style="left:535.79px;top:347px;font-family:'Liberation Sans';font-size:12.40px;font-weight:normal;color:#4d4d4d;">27 406,20</div>
<div class="abs" style="left:597.60px;top:342.80px;width:100.00px;height:20.30px;background:#b8d9e8;border-right:1px solid rgba(255,255,255,0.25);border-bottom:1px solid rgba(255,255,255,0.18)"></div>
<div class="t" style="left:635.85px;top:347px;font-family:'Liberation Sans';font-size:12.40px;font-weight:normal;color:#4d4d4d;">31 068,36</div>
<div class="abs" style="left:697.60px;top:342.80px;width:100.00px;height:20.30px;background:#cce9f4;border-right:1px solid rgba(255,255,255,0.25);border-bottom:1px solid rgba(255,255,255,0.18)"></div>
<div class="t" style="left:742.53px;top:347px;font-family:'Liberation Sans';font-size:12.40px;font-weight:normal;color:#4d4d4d;">1 189,14</div>
<div class="abs" style="left:797.60px;top:342.80px;width:100.40px;height:20.30px;background:#cce9f4;border-right:1px solid rgba(255,255,255,0.25);border-bottom:1px solid rgba(255,255,255,0.18)"></div>
<div class="t" style="left:842.19px;top:347px;font-family:'Liberation Sans';font-size:12.40px;font-weight:normal;color:#4d4d4d;transform:scaleX(0.9950);transform-origin:0 0;">2 179,92</div>
<div class="abs" style="left:170.5px;top:381.70px;width:226.7px;height:1px;background:#eeeeee"></div>
<svg class="abs" style="left:175.4px;top:367.70px" width="9" height="9" viewBox="0 0 9 9"><circle cx="4.4" cy="4.3" r="4.25" fill="#2e2e2e"/><path d="M4.4 2.6 V6 M2.7 4.3 H6.1" stroke="#fff" stroke-width="1.25"/></svg>
<div class="t" style="left:193.45px;top:366px;font-family:'Liberation Sans';font-size:12.00px;font-weight:normal;color:#4d4d4d;transform:scaleX(0.9691);transform-origin:0 0;">Менеджер 2</div>
<div class="abs" style="left:398.00px;top:362.50px;width:99.30px;height:20.30px;background:#cae8f3;border-right:1px solid rgba(255,255,255,0.25);border-bottom:1px solid rgba(255,255,255,0.18)"></div>
<div class="t" style="left:435.49px;top:366px;font-family:'Liberation Sans';font-size:12.40px;font-weight:normal;color:#4d4d4d;transform:scaleX(0.9950);transform-origin:0 0;">41 920,70</div>
<div class="abs" style="left:497.30px;top:362.50px;width:100.30px;height:20.30px;background:#cce9f4;border-right:1px solid rgba(255,255,255,0.25);border-bottom:1px solid rgba(255,255,255,0.18)"></div>
<div class="t" style="left:542.53px;top:366px;font-family:'Liberation Sans';font-size:12.40px;font-weight:normal;color:#4d4d4d;">1 315,14</div>
<div class="abs" style="left:597.60px;top:362.50px;width:100.00px;height:20.30px;background:#cce9f4;border-right:1px solid rgba(255,255,255,0.25);border-bottom:1px solid rgba(255,255,255,0.18)"></div>
<div class="t" style="left:642.71px;top:366px;font-family:'Liberation Sans';font-size:12.40px;font-weight:normal;color:#4d4d4d;">2 583,48</div>
<div class="abs" style="left:697.60px;top:362.50px;width:100.00px;height:20.30px;background:#cce9f4;border-right:1px solid rgba(255,255,255,0.25);border-bottom:1px solid rgba(255,255,255,0.18)"></div>
<div class="t" style="left:742.71px;top:366px;font-family:'Liberation Sans';font-size:12.40px;font-weight:normal;color:#4d4d4d;transform:scaleX(0.9950);transform-origin:0 0;">1 214,46</div>
<div class="abs" style="left:797.60px;top:362.50px;width:100.40px;height:20.30px;background:#93bad0;border-right:1px solid rgba(255,255,255,0.25);border-bottom:1px solid rgba(255,255,255,0.18)"></div>
<div class="t" style="left:835.19px;top:366px;font-family:'Liberation Sans';font-size:12.40px;font-weight:normal;color:#4d4d4d;transform:scaleX(0.9950);transform-origin:0 0;">33 206,40</div>
<div class="abs" style="left:170.5px;top:401.40px;width:226.7px;height:1px;background:#eeeeee"></div>
<svg class="abs" style="left:175.4px;top:387.40px" width="9" height="9" viewBox="0 0 9 9"><circle cx="4.4" cy="4.3" r="4.25" fill="#2e2e2e"/><path d="M4.4 2.6 V6 M2.7 4.3 H6.1" stroke="#fff" stroke-width="1.25"/></svg>
<div class="t" style="left:193.45px;top:385px;font-family:'Liberation Sans';font-size:12.00px;font-weight:normal;color:#4d4d4d;transform:scaleX(0.9691);transform-origin:0 0;">Менеджер 3</div>
<div class="abs" style="left:398.00px;top:382.20px;width:99.30px;height:20.30px;background:#b5d8e7;border-right:1px solid rgba(255,255,255,0.25);border-bottom:1px solid rgba(255,255,255,0.18)"></div>
<div class="t" style="left:428.75px;top:386px;font-family:'Liberation Sans';font-size:12.40px;font-weight:normal;color:#4d4d4d;transform:scaleX(0.9950);transform-origin:0 0;">408 848,91</div>
<div class="abs" style="left:497.30px;top:382.20px;width:100.30px;height:20.30px;background:#c0e0ec;border-right:1px solid rgba(255,255,255,0.25);border-bottom:1px solid rgba(255,255,255,0.18)"></div>
<div class="t" style="left:535.83px;top:386px;font-family:'Liberation Sans';font-size:12.40px;font-weight:normal;color:#4d4d4d;transform:scaleX(0.9950);transform-origin:0 0;">44 828,85</div>
<div class="abs" style="left:597.60px;top:382.20px;width:100.00px;height:20.30px;background:#c8e6f2;border-right:1px solid rgba(255,255,255,0.25);border-bottom:1px solid rgba(255,255,255,0.18)"></div>
<div class="t" style="left:635.89px;top:386px;font-family:'Liberation Sans';font-size:12.40px;font-weight:normal;color:#4d4d4d;transform:scaleX(0.9950);transform-origin:0 0;">29 061,19</div>
<div class="abs" style="left:697.60px;top:382.20px;width:100.00px;height:20.30px;background:#b3d6e5;border-right:1px solid rgba(255,255,255,0.25);border-bottom:1px solid rgba(255,255,255,0.18)"></div>
<div class="t" style="left:735.85px;top:386px;font-family:'Liberation Sans';font-size:12.40px;font-weight:normal;color:#4d4d4d;transform:scaleX(0.9950);transform-origin:0 0;">28 308,13</div>
<div class="abs" style="left:797.60px;top:382.20px;width:100.40px;height:20.30px;background:#9bc1d5;border-right:1px solid rgba(255,255,255,0.25);border-bottom:1px solid rgba(255,255,255,0.18)"></div>
<div class="t" style="left:835.23px;top:386px;font-family:'Liberation Sans';font-size:12.40px;font-weight:normal;color:#4d4d4d;">29 841,45</div>
<div class="abs" style="left:170.5px;top:421.10px;width:226.7px;height:1px;background:#eeeeee"></div>
<svg class="abs" style="left:175.4px;top:407.10px" width="9" height="9" viewBox="0 0 9 9"><circle cx="4.4" cy="4.3" r="4.25" fill="#2e2e2e"/><path d="M4.4 2.6 V6 M2.7 4.3 H6.1" stroke="#fff" stroke-width="1.25"/></svg>
<div class="t" style="left:193.45px;top:405px;font-family:'Liberation Sans';font-size:12.00px;font-weight:normal;color:#4d4d4d;transform:scaleX(0.9691);transform-origin:0 0;">Менеджер 4</div>
<div class="abs" style="left:398.00px;top:401.90px;width:99.30px;height:20.30px;background:#aed3e3;border-right:1px solid rgba(255,255,255,0.25);border-bottom:1px solid rgba(255,255,255,0.18)"></div>
<div class="t" style="left:428.68px;top:406px;font-family:'Liberation Sans';font-size:12.40px;font-weight:normal;color:#4d4d4d;transform:scaleX(0.9950);transform-origin:0 0;">543 231,28</div>
<div class="abs" style="left:497.30px;top:401.90px;width:100.30px;height:20.30px;background:#cce9f4;border-right:1px solid rgba(255,255,255,0.25);border-bottom:1px solid rgba(255,255,255,0.18)"></div>
<div class="t" style="left:542.71px;top:406px;font-family:'Liberation Sans';font-size:12.40px;font-weight:normal;color:#4d4d4d;transform:scaleX(0.9950);transform-origin:0 0;">3 975,48</div>
<div class="abs" style="left:597.60px;top:401.90px;width:100.00px;height:20.30px;background:#cbe8f3;border-right:1px solid rgba(255,255,255,0.25);border-bottom:1px solid rgba(255,255,255,0.18)"></div>
<div class="t" style="left:642.79px;top:406px;font-family:'Liberation Sans';font-size:12.40px;font-weight:normal;color:#4d4d4d;transform:scaleX(0.9950);transform-origin:0 0;">5 299,62</div>
<div class="abs" style="left:697.60px;top:401.90px;width:100.00px;height:20.30px;background:#cbe8f3;border-right:1px solid rgba(255,255,255,0.25);border-bottom:1px solid rgba(255,255,255,0.18)"></div>
<div class="t" style="left:742.71px;top:406px;font-family:'Liberation Sans';font-size:12.40px;font-weight:normal;color:#4d4d4d;">6 059,28</div>
<div class="abs" style="left:797.60px;top:401.90px;width:100.40px;height:20.30px;background:#cae8f3;border-right:1px solid rgba(255,255,255,0.25);border-bottom:1px solid rgba(255,255,255,0.18)"></div>
<div class="t" style="left:842.05px;top:406px;font-family:'Liberation Sans';font-size:12.40px;font-weight:normal;color:#4d4d4d;transform:scaleX(0.9950);transform-origin:0 0;">5 335,80</div>
<div class="abs" style="left:170.5px;top:440.80px;width:226.7px;height:1px;background:#eeeeee"></div>
<svg class="abs" style="left:175.4px;top:426.80px" width="9" height="9" viewBox="0 0 9 9"><circle cx="4.4" cy="4.3" r="4.25" fill="#2e2e2e"/><path d="M4.4 2.6 V6 M2.7 4.3 H6.1" stroke="#fff" stroke-width="1.25"/></svg>
<div class="t" style="left:193.45px;top:425px;font-family:'Liberation Sans';font-size:12.00px;font-weight:normal;color:#4d4d4d;transform:scaleX(0.9691);transform-origin:0 0;">Менеджер 5</div>
<div class="abs" style="left:398.00px;top:421.60px;width:99.30px;height:20.30px;background:#cbe8f3;border-right:1px solid rgba(255,255,255,0.25);border-bottom:1px solid rgba(255,255,255,0.18)"></div>
<div class="t" style="left:435.53px;top:426px;font-family:'Liberation Sans';font-size:12.40px;font-weight:normal;color:#4d4d4d;transform:scaleX(0.9950);transform-origin:0 0;">29 871,75</div>
<div class="abs" style="left:497.30px;top:421.60px;width:100.30px;height:20.30px;background:#cce9f4;border-right:1px solid rgba(255,255,255,0.25);border-bottom:1px solid rgba(255,255,255,0.18)"></div>
<div class="t" style="left:542.71px;top:426px;font-family:'Liberation Sans';font-size:12.40px;font-weight:normal;color:#4d4d4d;">4 485,48</div>
<div class="abs" style="left:597.60px;top:421.60px;width:100.00px;height:20.30px;background:#cce9f4;border-right:1px solid rgba(255,255,255,0.25);border-bottom:1px solid rgba(255,255,255,0.18)"></div>
<div class="t" style="left:642.71px;top:426px;font-family:'Liberation Sans';font-size:12.40px;font-weight:normal;color:#4d4d4d;transform:scaleX(0.9950);transform-origin:0 0;">1 194,48</div>
<div class="abs" style="left:697.60px;top:421.60px;width:100.00px;height:20.30px;background:#cbe8f3;border-right:1px solid rgba(255,255,255,0.25);border-bottom:1px solid rgba(255,255,255,0.18)"></div>
<div class="t" style="left:742.65px;top:426px;font-family:'Liberation Sans';font-size:12.40px;font-weight:normal;color:#4d4d4d;">4 000,00</div>
<div class="abs" style="left:797.60px;top:421.60px;width:100.40px;height:20.30px;background:#cce9f4;border-right:1px solid rgba(255,255,255,0.25);border-bottom:1px solid rgba(255,255,255,0.18)"></div>
<div class="t" style="left:852.48px;top:426px;font-family:'Liberation Sans';font-size:12.40px;font-weight:normal;color:#4d4d4d;transform:scaleX(0.9950);transform-origin:0 0;">747,67</div>
<div class="abs" style="left:170.5px;top:460.50px;width:226.7px;height:1px;background:#eeeeee"></div>
<svg class="abs" style="left:175.4px;top:446.50px" width="9" height="9" viewBox="0 0 9 9"><circle cx="4.4" cy="4.3" r="4.25" fill="#2e2e2e"/><path d="M4.4 2.6 V6 M2.7 4.3 H6.1" stroke="#fff" stroke-width="1.25"/></svg>
<div class="t" style="left:193.45px;top:444px;font-family:'Liberation Sans';font-size:12.00px;font-weight:normal;color:#4d4d4d;transform:scaleX(0.9691);transform-origin:0 0;">Менеджер 6</div>
<div class="abs" style="left:398.00px;top:441.30px;width:99.30px;height:20.30px;background:#b8daea;border-right:1px solid rgba(255,255,255,0.25);border-bottom:1px solid rgba(255,255,255,0.18)"></div>
<div class="t" style="left:428.51px;top:445px;font-family:'Liberation Sans';font-size:12.40px;font-weight:normal;color:#4d4d4d;transform:scaleX(0.9950);transform-origin:0 0;">342 940,44</div>
<div class="abs" style="left:497.30px;top:441.30px;width:100.30px;height:20.30px;background:#c9e7f2;border-right:1px solid rgba(255,255,255,0.25);border-bottom:1px solid rgba(255,255,255,0.18)"></div>
<div class="t" style="left:535.85px;top:445px;font-family:'Liberation Sans';font-size:12.40px;font-weight:normal;color:#4d4d4d;transform:scaleX(0.9950);transform-origin:0 0;">23 674,08</div>
<div class="abs" style="left:597.60px;top:441.30px;width:100.00px;height:20.30px;background:#add2e3;border-right:1px solid rgba(255,255,255,0.25);border-bottom:1px solid rgba(255,255,255,0.18)"></div>
<div class="t" style="left:635.67px;top:445px;font-family:'Liberation Sans';font-size:12.40px;font-weight:normal;color:#4d4d4d;">59 044,94</div>
<div class="abs" style="left:697.60px;top:441.30px;width:100.00px;height:20.30px;background:#93b9cf;border-right:1px solid rgba(255,255,255,0.25);border-bottom:1px solid rgba(255,255,255,0.18)"></div>
<div class="t" style="left:735.85px;top:445px;font-family:'Liberation Sans';font-size:12.40px;font-weight:normal;color:#4d4d4d;transform:scaleX(0.9950);transform-origin:0 0;">71 286,18</div>
<div class="abs" style="left:797.60px;top:441.30px;width:100.40px;height:20.30px;background:#f1f1f1;border-right:1px solid #f7f7f7;border-bottom:1px solid #f7f7f7"></div>
<div class="t" style="left:801.11px;top:445px;font-family:'Liberation Sans';font-size:11.60px;font-weight:normal;color:#8a8a8a;transform:scaleX(1.3418);transform-origin:0 0;">-</div>
<div class="abs" style="left:170.5px;top:480.20px;width:226.7px;height:1px;background:#eeeeee"></div>
<svg class="abs" style="left:175.4px;top:466.20px" width="9" height="9" viewBox="0 0 9 9"><circle cx="4.4" cy="4.3" r="4.25" fill="#2e2e2e"/><path d="M4.4 2.6 V6 M2.7 4.3 H6.1" stroke="#fff" stroke-width="1.25"/></svg>
<div class="t" style="left:193.45px;top:464px;font-family:'Liberation Sans';font-size:12.00px;font-weight:normal;color:#4d4d4d;transform:scaleX(0.9691);transform-origin:0 0;">Менеджер 7</div>
<div class="abs" style="left:398.00px;top:461.00px;width:99.30px;height:20.30px;background:#cae8f3;border-right:1px solid rgba(255,255,255,0.25);border-bottom:1px solid rgba(255,255,255,0.18)"></div>
<div class="t" style="left:435.61px;top:465px;font-family:'Liberation Sans';font-size:12.40px;font-weight:normal;color:#4d4d4d;transform:scaleX(0.9950);transform-origin:0 0;">46 878,91</div>
<div class="abs" style="left:497.30px;top:461.00px;width:100.30px;height:20.30px;background:#cbe8f3;border-right:1px solid rgba(255,255,255,0.25);border-bottom:1px solid rgba(255,255,255,0.18)"></div>
<div class="t" style="left:542.53px;top:465px;font-family:'Liberation Sans';font-size:12.40px;font-weight:normal;color:#4d4d4d;">9 914,64</div>
<div class="abs" style="left:597.60px;top:461.00px;width:100.00px;height:20.30px;background:#cce9f4;border-right:1px solid rgba(255,255,255,0.25);border-bottom:1px solid rgba(255,255,255,0.18)"></div>
<div class="t" style="left:642.53px;top:465px;font-family:'Liberation Sans';font-size:12.40px;font-weight:normal;color:#4d4d4d;">4 850,04</div>
<div class="abs" style="left:697.60px;top:461.00px;width:100.00px;height:20.30px;background:#cbe8f3;border-right:1px solid rgba(255,255,255,0.25);border-bottom:1px solid rgba(255,255,255,0.18)"></div>
<div class="t" style="left:742.53px;top:465px;font-family:'Liberation Sans';font-size:12.40px;font-weight:normal;color:#4d4d4d;transform:scaleX(0.9950);transform-origin:0 0;">5 912,64</div>
<div class="abs" style="left:797.60px;top:461.00px;width:100.40px;height:20.30px;background:#aed3e3;border-right:1px solid rgba(255,255,255,0.25);border-bottom:1px solid rgba(255,255,255,0.18)"></div>
<div class="t" style="left:835.25px;top:465px;font-family:'Liberation Sans';font-size:12.40px;font-weight:normal;color:#4d4d4d;">15 956,58</div>
<div class="abs" style="left:170.5px;top:499.90px;width:226.7px;height:1px;background:#eeeeee"></div>
<svg class="abs" style="left:175.4px;top:485.90px" width="9" height="9" viewBox="0 0 9 9"><circle cx="4.4" cy="4.3" r="4.25" fill="#2e2e2e"/><path d="M4.4 2.6 V6 M2.7 4.3 H6.1" stroke="#fff" stroke-width="1.25"/></svg>
<div class="t" style="left:193.45px;top:484px;font-family:'Liberation Sans';font-size:12.00px;font-weight:normal;color:#4d4d4d;transform:scaleX(0.9691);transform-origin:0 0;">Менеджер 8</div>
<div class="abs" style="left:398.00px;top:480.70px;width:99.30px;height:20.30px;background:#cbe8f3;border-right:1px solid rgba(255,255,255,0.25);border-bottom:1px solid rgba(255,255,255,0.18)"></div>
<div class="t" style="left:435.55px;top:485px;font-family:'Liberation Sans';font-size:12.40px;font-weight:normal;color:#4d4d4d;">21 913,68</div>
<div class="abs" style="left:497.30px;top:480.70px;width:100.30px;height:20.30px;background:#cce9f4;border-right:1px solid rgba(255,255,255,0.25);border-bottom:1px solid rgba(255,255,255,0.18)"></div>
<div class="t" style="left:553.00px;top:485px;font-family:'Liberation Sans';font-size:12.40px;font-weight:normal;color:#4d4d4d;">293,76</div>
<div class="abs" style="left:597.60px;top:480.70px;width:100.00px;height:20.30px;background:#cce9f4;border-right:1px solid rgba(255,255,255,0.25);border-bottom:1px solid rgba(255,255,255,0.18)"></div>
<div class="t" style="left:642.71px;top:485px;font-family:'Liberation Sans';font-size:12.40px;font-weight:normal;color:#4d4d4d;">4 457,76</div>
<div class="abs" style="left:697.60px;top:480.70px;width:100.00px;height:20.30px;background:#c9e7f2;border-right:1px solid rgba(255,255,255,0.25);border-bottom:1px solid rgba(255,255,255,0.18)"></div>
<div class="t" style="left:742.71px;top:485px;font-family:'Liberation Sans';font-size:12.40px;font-weight:normal;color:#4d4d4d;">8 031,88</div>
<div class="abs" style="left:797.60px;top:480.70px;width:100.40px;height:20.30px;background:#cce9f4;border-right:1px solid rgba(255,255,255,0.25);border-bottom:1px solid rgba(255,255,255,0.18)"></div>
<div class="t" style="left:852.48px;top:485px;font-family:'Liberation Sans';font-size:12.40px;font-weight:normal;color:#4d4d4d;">302,22</div>
<div class="abs" style="left:170.5px;top:519.60px;width:226.7px;height:1px;background:#eeeeee"></div>
<svg class="abs" style="left:175.4px;top:505.60px" width="9" height="9" viewBox="0 0 9 9"><circle cx="4.4" cy="4.3" r="4.25" fill="#2e2e2e"/><path d="M4.4 2.6 V6 M2.7 4.3 H6.1" stroke="#fff" stroke-width="1.25"/></svg>
<div class="t" style="left:193.45px;top:503px;font-family:'Liberation Sans';font-size:12.00px;font-weight:normal;color:#4d4d4d;transform:scaleX(0.9691);transform-origin:0 0;">Менеджер 9</div>
<div class="abs" style="left:398.00px;top:500.40px;width:99.30px;height:20.30px;background:#cae8f3;border-right:1px solid rgba(255,255,255,0.25);border-bottom:1px solid rgba(255,255,255,0.18)"></div>
<div class="t" style="left:435.63px;top:504px;font-family:'Liberation Sans';font-size:12.40px;font-weight:normal;color:#4d4d4d;transform:scaleX(0.9950);transform-origin:0 0;">50 547,17</div>
<div class="abs" style="left:497.30px;top:500.40px;width:100.30px;height:20.30px;background:#cce9f4;border-right:1px solid rgba(255,255,255,0.25);border-bottom:1px solid rgba(255,255,255,0.18)"></div>
<div class="t" style="left:552.94px;top:504px;font-family:'Liberation Sans';font-size:12.40px;font-weight:normal;color:#4d4d4d;transform:scaleX(0.9950);transform-origin:0 0;">726,60</div>
<div class="abs" style="left:597.60px;top:500.40px;width:100.00px;height:20.30px;background:#cbe8f3;border-right:1px solid rgba(255,255,255,0.25);border-bottom:1px solid rgba(255,255,255,0.18)"></div>
<div class="t" style="left:642.53px;top:504px;font-family:'Liberation Sans';font-size:12.40px;font-weight:normal;color:#4d4d4d;transform:scaleX(0.9950);transform-origin:0 0;">6 877,74</div>
<div class="abs" style="left:697.60px;top:500.40px;width:100.00px;height:20.30px;background:#c5e4f0;border-right:1px solid rgba(255,255,255,0.25);border-bottom:1px solid rgba(255,255,255,0.18)"></div>
<div class="t" style="left:735.85px;top:504px;font-family:'Liberation Sans';font-size:12.40px;font-weight:normal;color:#4d4d4d;">12 151,86</div>
<div class="abs" style="left:797.60px;top:500.40px;width:100.40px;height:20.30px;background:#cce9f4;border-right:1px solid rgba(255,255,255,0.25);border-bottom:1px solid rgba(255,255,255,0.18)"></div>
<div class="t" style="left:852.48px;top:504px;font-family:'Liberation Sans';font-size:12.40px;font-weight:normal;color:#4d4d4d;transform:scaleX(0.9950);transform-origin:0 0;">422,82</div>
<div class="abs" style="left:170.5px;top:539.30px;width:226.7px;height:1px;background:#eeeeee"></div>
<svg class="abs" style="left:175.4px;top:525.30px" width="9" height="9" viewBox="0 0 9 9"><circle cx="4.4" cy="4.3" r="4.25" fill="#2e2e2e"/><path d="M4.4 2.6 V6 M2.7 4.3 H6.1" stroke="#fff" stroke-width="1.25"/></svg>
<div class="t" style="left:193.45px;top:523px;font-family:'Liberation Sans';font-size:12.00px;font-weight:normal;color:#4d4d4d;transform:scaleX(0.9691);transform-origin:0 0;">Менеджер 10</div>
<div class="abs" style="left:398.00px;top:520.10px;width:99.30px;height:20.30px;background:#cae8f3;border-right:1px solid rgba(255,255,255,0.25);border-bottom:1px solid rgba(255,255,255,0.18)"></div>
<div class="t" style="left:436.53px;top:524px;font-family:'Liberation Sans';font-size:12.40px;font-weight:normal;color:#4d4d4d;">42 902,11</div>
<div class="abs" style="left:497.30px;top:520.10px;width:100.30px;height:20.30px;background:#cce9f4;border-right:1px solid rgba(255,255,255,0.25);border-bottom:1px solid rgba(255,255,255,0.18)"></div>
<div class="t" style="left:542.65px;top:524px;font-family:'Liberation Sans';font-size:12.40px;font-weight:normal;color:#4d4d4d;transform:scaleX(0.9950);transform-origin:0 0;">2 751,30</div>
<div class="abs" style="left:597.60px;top:520.10px;width:100.00px;height:20.30px;background:#cce9f4;border-right:1px solid rgba(255,255,255,0.25);border-bottom:1px solid rgba(255,255,255,0.18)"></div>
<div class="t" style="left:642.65px;top:524px;font-family:'Liberation Sans';font-size:12.40px;font-weight:normal;color:#4d4d4d;">1 068,00</div>
<div class="abs" style="left:697.60px;top:520.10px;width:100.00px;height:20.30px;background:#c6e5f1;border-right:1px solid rgba(255,255,255,0.25);border-bottom:1px solid rgba(255,255,255,0.18)"></div>
<div class="t" style="left:735.85px;top:524px;font-family:'Liberation Sans';font-size:12.40px;font-weight:normal;color:#4d4d4d;">10 672,86</div>
<div class="abs" style="left:797.60px;top:520.10px;width:100.40px;height:20.30px;background:#cce9f4;border-right:1px solid rgba(255,255,255,0.25);border-bottom:1px solid rgba(255,255,255,0.18)"></div>
<div class="t" style="left:842.19px;top:524px;font-family:'Liberation Sans';font-size:12.40px;font-weight:normal;color:#4d4d4d;">1 907,82</div>
<div class="abs" style="left:170.5px;top:559.00px;width:226.7px;height:1px;background:#eeeeee"></div>
<svg class="abs" style="left:175.4px;top:545.00px" width="9" height="9" viewBox="0 0 9 9"><circle cx="4.4" cy="4.3" r="4.25" fill="#2e2e2e"/><path d="M4.4 2.6 V6 M2.7 4.3 H6.1" stroke="#fff" stroke-width="1.25"/></svg>
<div class="t" style="left:193.45px;top:543px;font-family:'Liberation Sans';font-size:12.00px;font-weight:normal;color:#4d4d4d;transform:scaleX(0.9691);transform-origin:0 0;">Менеджер 11</div>
<div class="abs" style="left:398.00px;top:539.80px;width:99.30px;height:20.30px;background:#c9e7f2;border-right:1px solid rgba(255,255,255,0.25);border-bottom:1px solid rgba(255,255,255,0.18)"></div>
<div class="t" style="left:435.61px;top:544px;font-family:'Liberation Sans';font-size:12.40px;font-weight:normal;color:#4d4d4d;">53 738,71</div>
<div class="abs" style="left:497.30px;top:539.80px;width:100.30px;height:20.30px;background:#cce9f4;border-right:1px solid rgba(255,255,255,0.25);border-bottom:1px solid rgba(255,255,255,0.18)"></div>
<div class="t" style="left:542.53px;top:544px;font-family:'Liberation Sans';font-size:12.40px;font-weight:normal;color:#4d4d4d;">1 064,34</div>
<div class="abs" style="left:597.60px;top:539.80px;width:100.00px;height:20.30px;background:#cce9f4;border-right:1px solid rgba(255,255,255,0.25);border-bottom:1px solid rgba(255,255,255,0.18)"></div>
<div class="t" style="left:642.79px;top:544px;font-family:'Liberation Sans';font-size:12.40px;font-weight:normal;color:#4d4d4d;">1 605,42</div>
<div class="abs" style="left:697.60px;top:539.80px;width:100.00px;height:20.30px;background:#cce9f4;border-right:1px solid rgba(255,255,255,0.25);border-bottom:1px solid rgba(255,255,255,0.18)"></div>
<div class="t" style="left:753.00px;top:544px;font-family:'Liberation Sans';font-size:12.40px;font-weight:normal;color:#4d4d4d;transform:scaleX(0.9950);transform-origin:0 0;">975,96</div>
<div class="abs" style="left:797.60px;top:539.80px;width:100.40px;height:20.30px;background:#f1f1f1;border-right:1px solid #f7f7f7;border-bottom:1px solid #f7f7f7"></div>
<div class="t" style="left:801.11px;top:544px;font-family:'Liberation Sans';font-size:11.60px;font-weight:normal;color:#8a8a8a;transform:scaleX(1.3418);transform-origin:0 0;">-</div>
<div class="abs" style="left:170.5px;top:578.70px;width:226.7px;height:1px;background:#eeeeee"></div>
<svg class="abs" style="left:175.4px;top:564.70px" width="9" height="9" viewBox="0 0 9 9"><circle cx="4.4" cy="4.3" r="4.25" fill="#2e2e2e"/><path d="M4.4 2.6 V6 M2.7 4.3 H6.1" stroke="#fff" stroke-width="1.25"/></svg>
<div class="t" style="left:193.45px;top:563px;font-family:'Liberation Sans';font-size:12.00px;font-weight:normal;color:#4d4d4d;transform:scaleX(0.9691);transform-origin:0 0;">Менеджер 12</div>
<div class="abs" style="left:398.00px;top:559.50px;width:99.30px;height:20.30px;background:#f1f1f1;border-right:1px solid #f7f7f7;border-bottom:1px solid #f7f7f7"></div>
<div class="t" style="left:400.71px;top:563px;font-family:'Liberation Sans';font-size:11.60px;font-weight:normal;color:#8a8a8a;transform:scaleX(1.3418);transform-origin:0 0;">-</div>
<div class="abs" style="left:497.30px;top:559.50px;width:100.30px;height:20.30px;background:#f1f1f1;border-right:1px solid #f7f7f7;border-bottom:1px solid #f7f7f7"></div>
<div class="t" style="left:500.81px;top:563px;font-family:'Liberation Sans';font-size:11.60px;font-weight:normal;color:#8a8a8a;transform:scaleX(1.3418);transform-origin:0 0;">-</div>
<div class="abs" style="left:597.60px;top:559.50px;width:100.00px;height:20.30px;background:#f1f1f1;border-right:1px solid #f7f7f7;border-bottom:1px solid #f7f7f7"></div>
<div class="t" style="left:601.11px;top:563px;font-family:'Liberation Sans';font-size:11.60px;font-weight:normal;color:#8a8a8a;transform:scaleX(1.3418);transform-origin:0 0;">-</div>
<div class="abs" style="left:697.60px;top:559.50px;width:100.00px;height:20.30px;background:#f1f1f1;border-right:1px solid #f7f7f7;border-bottom:1px solid #f7f7f7"></div>
<div class="t" style="left:701.11px;top:563px;font-family:'Liberation Sans';font-size:11.60px;font-weight:normal;color:#8a8a8a;transform:scaleX(1.3418);transform-origin:0 0;">-</div>
<div class="abs" style="left:797.60px;top:559.50px;width:100.40px;height:20.30px;background:#f1f1f1;border-right:1px solid #f7f7f7;border-bottom:1px solid #f7f7f7"></div>
<div class="t" style="left:801.11px;top:563px;font-family:'Liberation Sans';font-size:11.60px;font-weight:normal;color:#8a8a8a;transform:scaleX(1.3418);transform-origin:0 0;">-</div>
<div class="abs" style="left:170.5px;top:598.40px;width:226.7px;height:1px;background:#eeeeee"></div>
<svg class="abs" style="left:175.4px;top:584.40px" width="9" height="9" viewBox="0 0 9 9"><circle cx="4.4" cy="4.3" r="4.25" fill="#2e2e2e"/><path d="M4.4 2.6 V6 M2.7 4.3 H6.1" stroke="#fff" stroke-width="1.25"/></svg>
<div class="t" style="left:193.45px;top:582px;font-family:'Liberation Sans';font-size:12.00px;font-weight:normal;color:#4d4d4d;transform:scaleX(0.9691);transform-origin:0 0;">Менеджер 13</div>
<div class="abs" style="left:398.00px;top:579.20px;width:99.30px;height:20.30px;background:#cdeaf5;border-right:1px solid rgba(255,255,255,0.25);border-bottom:1px solid rgba(255,255,255,0.18)"></div>
<div class="t" style="left:435.53px;top:583px;font-family:'Liberation Sans';font-size:12.40px;font-weight:normal;color:#4d4d4d;transform:scaleX(0.9950);transform-origin:0 0;">14 073,75</div>
<div class="abs" style="left:497.30px;top:579.20px;width:100.30px;height:20.30px;background:#cdeaf5;border-right:1px solid rgba(255,255,255,0.25);border-bottom:1px solid rgba(255,255,255,0.18)"></div>
<div class="t" style="left:552.94px;top:583px;font-family:'Liberation Sans';font-size:12.40px;font-weight:normal;color:#4d4d4d;transform:scaleX(0.9950);transform-origin:0 0;">546,30</div>
<div class="abs" style="left:597.60px;top:579.20px;width:100.00px;height:20.30px;background:#cdeaf5;border-right:1px solid rgba(255,255,255,0.25);border-bottom:1px solid rgba(255,255,255,0.18)"></div>
<div class="t" style="left:653.08px;top:583px;font-family:'Liberation Sans';font-size:12.40px;font-weight:normal;color:#4d4d4d;transform:scaleX(0.9950);transform-origin:0 0;">642,42</div>
<div class="abs" style="left:697.60px;top:579.20px;width:100.00px;height:20.30px;background:#f1f1f1;border-right:1px solid #f7f7f7;border-bottom:1px solid #f7f7f7"></div>
<div class="t" style="left:701.11px;top:583px;font-family:'Liberation Sans';font-size:11.60px;font-weight:normal;color:#8a8a8a;transform:scaleX(1.3418);transform-origin:0 0;">-</div>
<div class="abs" style="left:797.60px;top:579.20px;width:100.40px;height:20.30px;background:#cce9f4;border-right:1px solid rgba(255,255,255,0.25);border-bottom:1px solid rgba(255,255,255,0.18)"></div>
<div class="t" style="left:842.05px;top:583px;font-family:'Liberation Sans';font-size:12.40px;font-weight:normal;color:#4d4d4d;">3 629,60</div>
<div class="abs" style="left:170.5px;top:618.10px;width:226.7px;height:1px;background:#eeeeee"></div>
<svg class="abs" style="left:175.4px;top:604.10px" width="9" height="9" viewBox="0 0 9 9"><circle cx="4.4" cy="4.3" r="4.25" fill="#2e2e2e"/><path d="M4.4 2.6 V6 M2.7 4.3 H6.1" stroke="#fff" stroke-width="1.25"/></svg>
<div class="t" style="left:193.45px;top:602px;font-family:'Liberation Sans';font-size:12.00px;font-weight:normal;color:#4d4d4d;transform:scaleX(0.9691);transform-origin:0 0;">Менеджер 14</div>
<div class="abs" style="left:398.00px;top:598.90px;width:99.30px;height:20.30px;background:#afd3e3;border-right:1px solid rgba(255,255,255,0.25);border-bottom:1px solid rgba(255,255,255,0.18)"></div>
<div class="t" style="left:428.67px;top:603px;font-family:'Liberation Sans';font-size:12.40px;font-weight:normal;color:#4d4d4d;transform:scaleX(0.9950);transform-origin:0 0;">544 942,95</div>
<div class="abs" style="left:497.30px;top:598.90px;width:100.30px;height:20.30px;background:#a7cde0;border-right:1px solid rgba(255,255,255,0.25);border-bottom:1px solid rgba(255,255,255,0.18)"></div>
<div class="t" style="left:529.07px;top:603px;font-family:'Liberation Sans';font-size:12.40px;font-weight:normal;color:#4d4d4d;">107 269,27</div>
<div class="abs" style="left:597.60px;top:598.90px;width:100.00px;height:20.30px;background:#8fb7cd;border-right:1px solid rgba(255,255,255,0.25);border-bottom:1px solid rgba(255,255,255,0.18)"></div>
<div class="t" style="left:628.93px;top:603px;font-family:'Liberation Sans';font-size:12.40px;font-weight:normal;color:#4d4d4d;">134 865,60</div>
<div class="abs" style="left:697.60px;top:598.90px;width:100.00px;height:20.30px;background:#a2c8da;border-right:1px solid rgba(255,255,255,0.25);border-bottom:1px solid rgba(255,255,255,0.18)"></div>
<div class="t" style="left:735.85px;top:603px;font-family:'Liberation Sans';font-size:12.40px;font-weight:normal;color:#4d4d4d;transform:scaleX(0.9950);transform-origin:0 0;">57 427,08</div>
<div class="abs" style="left:797.60px;top:598.90px;width:100.40px;height:20.30px;background:#f1f1f1;border-right:1px solid #f7f7f7;border-bottom:1px solid #f7f7f7"></div>
<div class="t" style="left:801.11px;top:603px;font-family:'Liberation Sans';font-size:11.60px;font-weight:normal;color:#8a8a8a;transform:scaleX(1.3418);transform-origin:0 0;">-</div>
<div class="abs" style="left:170.5px;top:637.80px;width:226.7px;height:1px;background:#eeeeee"></div>
<svg class="abs" style="left:175.4px;top:623.80px" width="9" height="9" viewBox="0 0 9 9"><circle cx="4.4" cy="4.3" r="4.25" fill="#2e2e2e"/><path d="M4.4 2.6 V6 M2.7 4.3 H6.1" stroke="#fff" stroke-width="1.25"/></svg>
<div class="t" style="left:193.45px;top:622px;font-family:'Liberation Sans';font-size:12.00px;font-weight:normal;color:#4d4d4d;transform:scaleX(0.9691);transform-origin:0 0;">Менеджер 15</div>
<div class="abs" style="left:398.00px;top:618.60px;width:99.30px;height:20.30px;background:#9dc4d7;border-right:1px solid rgba(255,255,255,0.25);border-bottom:1px solid rgba(255,255,255,0.18)"></div>
<div class="t" style="left:428.51px;top:623px;font-family:'Liberation Sans';font-size:12.40px;font-weight:normal;color:#4d4d4d;transform:scaleX(0.9950);transform-origin:0 0;">977 815,74</div>
<div class="abs" style="left:497.30px;top:618.60px;width:100.30px;height:20.30px;background:#92b9cf;border-right:1px solid rgba(255,255,255,0.25);border-bottom:1px solid rgba(255,255,255,0.18)"></div>
<div class="t" style="left:528.97px;top:623px;font-family:'Liberation Sans';font-size:12.40px;font-weight:normal;color:#4d4d4d;">194 485,55</div>
<div class="abs" style="left:597.60px;top:618.60px;width:100.00px;height:20.30px;background:#f1f1f1;border-right:1px solid #f7f7f7;border-bottom:1px solid #f7f7f7"></div>
<div class="t" style="left:601.11px;top:623px;font-family:'Liberation Sans';font-size:11.60px;font-weight:normal;color:#8a8a8a;transform:scaleX(1.3418);transform-origin:0 0;">-</div>
<div class="abs" style="left:697.60px;top:618.60px;width:100.00px;height:20.30px;background:#f1f1f1;border-right:1px solid #f7f7f7;border-bottom:1px solid #f7f7f7"></div>
<div class="t" style="left:701.11px;top:623px;font-family:'Liberation Sans';font-size:11.60px;font-weight:normal;color:#8a8a8a;transform:scaleX(1.3418);transform-origin:0 0;">-</div>
<div class="abs" style="left:797.60px;top:618.60px;width:100.40px;height:20.30px;background:#cce9f4;border-right:1px solid rgba(255,255,255,0.25);border-bottom:1px solid rgba(255,255,255,0.18)"></div>
<div class="t" style="left:852.40px;top:623px;font-family:'Liberation Sans';font-size:12.40px;font-weight:normal;color:#4d4d4d;transform:scaleX(0.9950);transform-origin:0 0;">346,56</div>
<div class="abs" style="left:170.5px;top:657.50px;width:226.7px;height:1px;background:#eeeeee"></div>
<svg class="abs" style="left:175.4px;top:643.50px" width="9" height="9" viewBox="0 0 9 9"><circle cx="4.4" cy="4.3" r="4.25" fill="#2e2e2e"/><path d="M4.4 2.6 V6 M2.7 4.3 H6.1" stroke="#fff" stroke-width="1.25"/></svg>
<div class="t" style="left:193.45px;top:641px;font-family:'Liberation Sans';font-size:12.00px;font-weight:normal;color:#4d4d4d;transform:scaleX(0.9691);transform-origin:0 0;">Менеджер 17</div>
<div class="abs" style="left:398.00px;top:638.30px;width:99.30px;height:20.30px;background:#a7cde0;border-right:1px solid rgba(255,255,255,0.25);border-bottom:1px solid rgba(255,255,255,0.18)"></div>
<div class="t" style="left:428.63px;top:642px;font-family:'Liberation Sans';font-size:12.40px;font-weight:normal;color:#4d4d4d;">764 586,60</div>
<div class="abs" style="left:497.30px;top:638.30px;width:100.30px;height:20.30px;background:#a1c8da;border-right:1px solid rgba(255,255,255,0.25);border-bottom:1px solid rgba(255,255,255,0.18)"></div>
<div class="t" style="left:528.98px;top:642px;font-family:'Liberation Sans';font-size:12.40px;font-weight:normal;color:#4d4d4d;">146 482,78</div>
<div class="abs" style="left:597.60px;top:638.30px;width:100.00px;height:20.30px;background:#a9cfe1;border-right:1px solid rgba(255,255,255,0.25);border-bottom:1px solid rgba(255,255,255,0.18)"></div>
<div class="t" style="left:635.79px;top:642px;font-family:'Liberation Sans';font-size:12.40px;font-weight:normal;color:#4d4d4d;transform:scaleX(0.9950);transform-origin:0 0;">91 126,80</div>
<div class="abs" style="left:697.60px;top:638.30px;width:100.00px;height:20.30px;background:#f1f1f1;border-right:1px solid #f7f7f7;border-bottom:1px solid #f7f7f7"></div>
<div class="t" style="left:701.11px;top:642px;font-family:'Liberation Sans';font-size:11.60px;font-weight:normal;color:#8a8a8a;transform:scaleX(1.3418);transform-origin:0 0;">-</div>
<div class="abs" style="left:797.60px;top:638.30px;width:100.40px;height:20.30px;background:#f1f1f1;border-right:1px solid #f7f7f7;border-bottom:1px solid #f7f7f7"></div>
<div class="t" style="left:801.11px;top:642px;font-family:'Liberation Sans';font-size:11.60px;font-weight:normal;color:#8a8a8a;transform:scaleX(1.3418);transform-origin:0 0;">-</div>
<div class="abs" style="left:908px;top:165px;width:364px;height:547px;border:1px solid #e8e8e8;background:#fff"></div>
<svg class="abs" style="left:919.5px;top:174.5px" width="14" height="14" viewBox="0 0 14 14" fill="none" stroke="#777" stroke-width="1"><rect x="0.5" y="5.5" width="3" height="8"/><rect x="5" y="8.5" width="3" height="5"/><rect x="9.8" y="0.5" width="3" height="13"/></svg>
<div class="t" style="left:939.07px;top:176px;font-family:'Liberation Sans';font-size:11.63px;font-weight:normal;color:#404040;transform:scaleX(0.9795);transform-origin:0 0;-webkit-text-stroke:0.6px #404040;">Корзины ДЗ</div>
<svg class="abs" style="left:1085.5px;top:174.5px" width="14" height="14" viewBox="0 0 14 14" fill="none" stroke="#777" stroke-width="1"><path d="M6 1.5 A5.5 5.5 0 1 0 12.5 8 H6 Z"/><path d="M8 0.5 A5.5 5.5 0 0 1 13.5 6 H8 Z"/></svg>
<div class="t" style="left:1106.72px;top:176px;font-family:'Liberation Sans';font-size:11.63px;font-weight:normal;color:#404040;transform:scaleX(0.9362);transform-origin:0 0;-webkit-text-stroke:0.6px #404040;">Доля ДЗ по корзинам</div>
<div class="abs" style="left:909px;top:197px;width:362px;height:1px;background:#ececec"></div>
<div class="abs" style="left:912.5px;top:195.8px;width:166.5px;height:2px;background:#1e8d4f"></div>
<div class="abs" style="left:968.7px;top:199px;width:1px;height:511px;background:#f3f3f3"></div>
<div class="abs" style="left:1028.7px;top:199px;width:1px;height:511px;background:#f3f3f3"></div>
<div class="abs" style="left:1088.5px;top:199px;width:1px;height:511px;background:#f3f3f3"></div>
<div class="abs" style="left:1148.5px;top:199px;width:1px;height:511px;background:#f3f3f3"></div>
<div class="abs" style="left:1208.5px;top:199px;width:1px;height:511px;background:#f3f3f3"></div>
<div class="abs" style="left:1268.0px;top:199px;width:1px;height:511px;background:#f3f3f3"></div>
<div class="abs" style="left:969.7px;top:210.00px;width:241.90px;height:44px;background:#2c5d89"></div>
<div class="t" style="left:928.09px;top:225px;font-family:'Liberation Sans';font-size:10.90px;font-weight:normal;color:#595959;transform:scaleX(0.8729);transform-origin:0 0;">Текущая</div>
<div class="t" style="left:1154.32px;top:226px;font-family:'Liberation Sans';font-size:12.94px;font-weight:normal;color:#fff;transform:scaleX(0.9431);transform-origin:0 0;">4 063 291</div>
<div class="abs" style="left:969.7px;top:273.60px;width:33.10px;height:44px;background:#2e6fa4"></div>
<div class="t" style="left:952.08px;top:289px;font-family:'Liberation Sans';font-size:11.34px;font-weight:normal;color:#595959;transform:scaleX(0.8360);transform-origin:0 0;">1-7</div>
<div class="t" style="left:1007.32px;top:290px;font-family:'Liberation Sans';font-size:12.94px;font-weight:normal;color:#595959;transform:scaleX(0.9336);transform-origin:0 0;">569 220</div>
<div class="abs" style="left:969.7px;top:337.20px;width:21.70px;height:44px;background:#3381b6"></div>
<div class="t" style="left:944.54px;top:353px;font-family:'Liberation Sans';font-size:11.34px;font-weight:normal;color:#595959;transform:scaleX(0.9283);transform-origin:0 0;">8-14</div>
<div class="t" style="left:994.53px;top:354px;font-family:'Liberation Sans';font-size:12.94px;font-weight:normal;color:#595959;transform:scaleX(0.9606);transform-origin:0 0;">373 746</div>
<div class="abs" style="left:969.7px;top:400.80px;width:11.90px;height:44px;background:#3d96c4"></div>
<div class="t" style="left:938.70px;top:416px;font-family:'Liberation Sans';font-size:11.34px;font-weight:normal;color:#595959;transform:scaleX(0.9317);transform-origin:0 0;">15-30</div>
<div class="t" style="left:985.39px;top:417px;font-family:'Liberation Sans';font-size:12.94px;font-weight:normal;color:#595959;transform:scaleX(0.9451);transform-origin:0 0;">207 229</div>
<div class="abs" style="left:969.7px;top:464.40px;width:5.30px;height:44px;background:#44a6cf"></div>
<div class="t" style="left:939.10px;top:480px;font-family:'Liberation Sans';font-size:11.34px;font-weight:normal;color:#595959;transform:scaleX(0.9174);transform-origin:0 0;">31-60</div>
<div class="t" style="left:977.41px;top:481px;font-family:'Liberation Sans';font-size:12.94px;font-weight:normal;color:#595959;transform:scaleX(0.9658);transform-origin:0 0;">93 877</div>
<div class="abs" style="left:969.7px;top:528.00px;width:1.30px;height:44px;background:#4bb0d4"></div>
<div class="t" style="left:938.97px;top:544px;font-family:'Liberation Sans';font-size:11.34px;font-weight:normal;color:#595959;transform:scaleX(0.9221);transform-origin:0 0;">61-90</div>
<div class="t" style="left:974.38px;top:544px;font-family:'Liberation Sans';font-size:12.94px;font-weight:normal;color:#595959;transform:scaleX(0.9538);transform-origin:0 0;">29 515</div>
<div class="abs" style="left:969.7px;top:591.60px;width:1.30px;height:44px;background:#54b8da"></div>
<div class="t" style="left:932.80px;top:607px;font-family:'Liberation Sans';font-size:11.34px;font-weight:normal;color:#595959;transform:scaleX(0.9322);transform-origin:0 0;">91-180</div>
<div class="t" style="left:974.53px;top:608px;font-family:'Liberation Sans';font-size:12.94px;font-weight:normal;color:#595959;transform:scaleX(0.9562);transform-origin:0 0;">37 684</div>
<div class="abs" style="left:969.7px;top:655.20px;width:11.30px;height:44px;background:#6ac3e2"></div>
<div class="t" style="left:940.20px;top:671px;font-family:'Liberation Sans';font-size:11.34px;font-weight:normal;color:#595959;transform:scaleX(0.8886);transform-origin:0 0;">> 180</div>
<div class="t" style="left:984.56px;top:672px;font-family:'Liberation Sans';font-size:12.94px;font-weight:normal;color:#595959;transform:scaleX(0.9498);transform-origin:0 0;">198 770</div>
</body></html>
